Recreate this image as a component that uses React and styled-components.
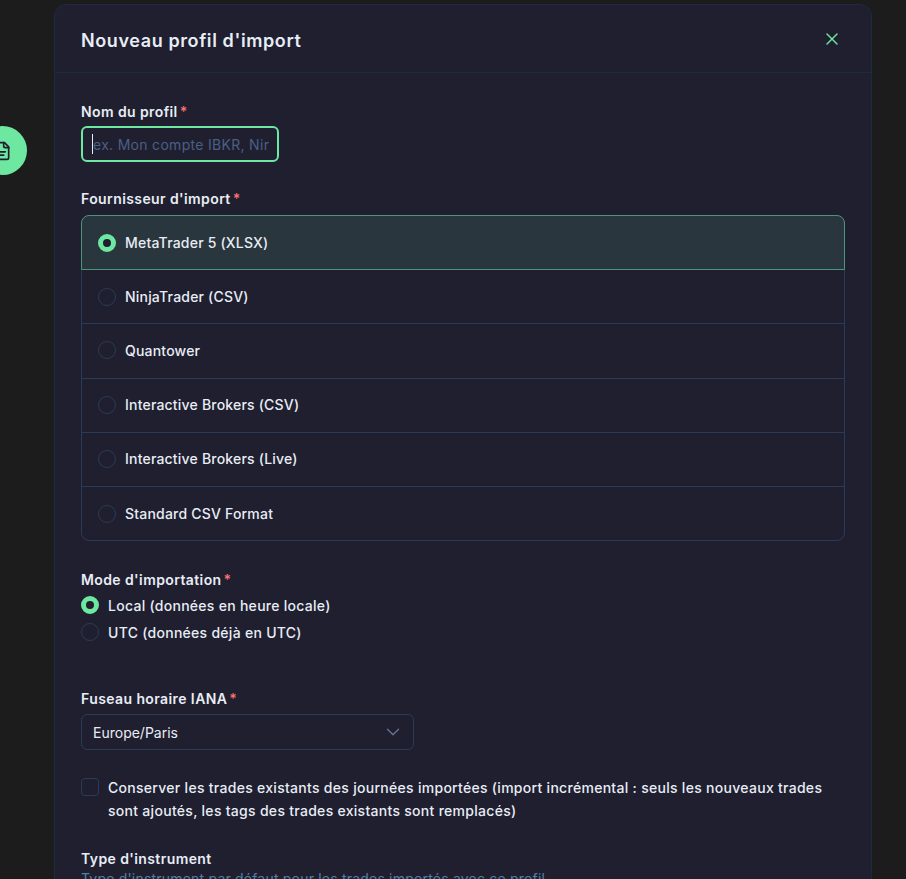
import React from "react";
import styled, { createGlobalStyle } from "styled-components";
import { X, ChevronDown } from "lucide-react";

const Global = createGlobalStyle`
  html, body { margin: 0; padding: 0; height: 879px; overflow: hidden; background: #1c1c1c; }
  body { font-family: Inter, "Noto Sans", sans-serif; }
  * { box-sizing: border-box; }
`;

const Page = styled.div`
  position: relative;
  height: 879px;
  overflow: hidden;
  padding: 4px 34px 0 54px;
`;
const Fab = styled.div`
  position: absolute;
  left: -22px;
  top: 126px;
  width: 49px;
  height: 49px;
  border-radius: 50%;
  background: #6ee7a0;
  display: flex;
  align-items: center;
  justify-content: flex-end;
  padding-right: 15px;
  color: #1f1f2f;
`;
const Modal = styled.section`
  background: #1f1f2f;
  border: 1px solid #1c2b42;
  border-radius: 12px;
  min-height: 1000px;
`;
const Header = styled.header`
  height: 68px;
  border-bottom: 1px solid #1c2b42;
  display: flex;
  align-items: center;
  justify-content: space-between;
  padding: 4px 29px 0 26px;
`;
const Title = styled.h2`
  margin: 0;
  font-size: 18px;
  font-weight: 600;
  letter-spacing: 0.6px;
  color: #e8edf5;
`;
const Close = styled.button`
  background: none;
  border: 0;
  padding: 0;
  width: 20px;
  height: 20px;
  margin-top: -4px;
  color: #6ee7a0;
  display: flex;
`;
const Body = styled.div`
  padding: 29px 26px 0;
`;
const Field = styled.div`
  margin-bottom: ${(p) => p.$mb || 0}px;
`;
const Label = styled.div`
  font-size: 14px;
  line-height: 20px;
  font-weight: 600;
  letter-spacing: 0.4px;
  color: #e8edf5;
  margin-bottom: ${(p) => p.$mb ?? 4}px;
`;
const Star = styled.span`
  color: #f87171;
  margin-left: 2px;
`;
const Input = styled.div`
  width: 198px;
  height: 36px;
  border: 2px solid #6ee7a0;
  border-radius: 6px;
  display: flex;
  align-items: center;
  padding-left: 9px;
  font-size: 14px;
  letter-spacing: 0.3px;
  color: #4a5f85;
  white-space: nowrap;
  overflow: hidden;
`;
const Caret = styled.span`
  width: 1px;
  height: 20px;
  background: #e8edf5;
  flex: none;
`;
const Group = styled.div`
  border-radius: 8px;
  display: flex;
  flex-direction: column;
`;
const Row = styled.div`
  height: ${(p) => p.$h}px;
  margin-top: ${(p) => (p.$first ? 0 : -1)}px;
  position: relative;
  z-index: ${(p) => (p.$active ? 1 : 0)};
  border: 1px solid ${(p) => (p.$active ? "#4e9479" : "#2b3b55")};
  background: ${(p) => (p.$active ? "#2a363e" : "transparent")};
  border-radius: ${(p) => (p.$first ? "8px 8px 0 0" : p.$last ? "0 0 8px 8px" : "0")};
  display: flex;
  align-items: center;
  gap: 9px;
  padding: 0 16px ${(p) => p.$pb}px;
  font-size: 14px;
  font-weight: 500;
  letter-spacing: 0.2px;
  color: #e8edf5;
`;
const Radio = styled.span`
  width: 18px;
  height: 18px;
  flex: none;
  border-radius: 50%;
  border: ${(p) => (p.$on ? "5px solid #6ee7a0" : "1px solid #2b3b55")};
  background: ${(p) => (p.$on ? "#1f1f2f" : "transparent")};
`;
const ModeRow = styled.div`
  display: flex;
  align-items: center;
  gap: 9px;
  height: 18px;
  margin-bottom: 9px;
  font-size: 14px;
  font-weight: 500;
  letter-spacing: 0.28px;
  color: #e8edf5;
`;
const Select = styled.div`
  width: 333px;
  height: 36px;
  border: 1px solid #2b3b55;
  border-radius: 6px;
  display: flex;
  align-items: center;
  justify-content: space-between;
  padding: 0 9px 0 11px;
  font-size: 14px;
  color: #e8edf5;
  svg { color: #64748b; }
`;
const CheckRow = styled.div`
  display: flex;
  gap: 9px;
  font-size: 14px;
  line-height: 23px;
  font-weight: 500;
  letter-spacing: 0.29px;
  color: #e8edf5;
`;
const Box = styled.span`
  width: 18px;
  height: 18px;
  flex: none;
  margin-top: 2px;
  border: 1px solid #2b3b55;
  border-radius: 4px;
`;
const Hint = styled.div`
  font-size: 14px;
  line-height: 20px;
  letter-spacing: 0.2px;
  color: #4f80aa;
`;

const providers = [
  { name: "MetaTrader 5 (XLSX)", h: 55, pb: 0 },
  { name: "NinjaTrader (CSV)", h: 55, pb: 0 },
  { name: "Quantower", h: 56, pb: 2 },
  { name: "Interactive Brokers (CSV)", h: 55, pb: 2 },
  { name: "Interactive Brokers (Live)", h: 55, pb: 2 },
  { name: "Standard CSV Format", h: 55, pb: 0 },
];

export default function App() {
  return (
    <Page>
      <Global />
      <Fab>
        <svg width="20" height="20" viewBox="0 0 24 24" fill="none" stroke="currentColor" strokeWidth="2" strokeLinecap="round" strokeLinejoin="round">
          <path d="M15 2H6a2 2 0 0 0-2 2v16a2 2 0 0 0 2 2h12a2 2 0 0 0 2-2V7Z" />
          <path d="M14 2v4a2 2 0 0 0 2 2h4" />
          <path d="M8 13h8" />
          <path d="M8 17h6" />
        </svg>
      </Fab>
      <Modal>
        <Header>
          <Title>Nouveau profil d'import</Title>
          <Close aria-label="Fermer"><X size={20} strokeWidth={1.75} /></Close>
        </Header>
        <Body>
          <Field $mb={27}>
            <Label>Nom du profil<Star>*</Star></Label>
            <Input><Caret />ex. Mon compte IBKR, Nir</Input>
          </Field>
          <Field $mb={29}>
            <Label $mb={6}>Fournisseur d'import<Star>*</Star></Label>
            <Group>
              {providers.map((p, i) => (
                <Row key={p.name} $h={p.h} $pb={p.pb} $active={i === 0} $first={i === 0} $last={i === providers.length - 1}>
                  <Radio $on={i === 0} />
                  {p.name}
                </Row>
              ))}
            </Group>
          </Field>
          <Field $mb={48}>
            <Label $mb={6}>Mode d'importation<Star>*</Star></Label>
            <ModeRow><Radio $on />Local (données en heure locale)</ModeRow>
            <ModeRow><Radio />UTC (données déjà en UTC)</ModeRow>
          </Field>
          <Field $mb={26}>
            <Label $mb={5}>Fuseau horaire IANA<Star>*</Star></Label>
            <Select>Europe/Paris<ChevronDown size={22} strokeWidth={1.5} /></Select>
          </Field>
          <Field $mb={27}>
            <CheckRow>
              <Box />
              <span>Conserver les trades existants des journées importées (import incrémental : seuls les nouveaux trades sont ajoutés, les tags des trades existants sont remplacés)</span>
            </CheckRow>
          </Field>
          <Field>
            <Label $mb={0}>Type d'instrument</Label>
            <Hint>Type d'instrument par défaut pour les trades importés avec ce profil</Hint>
          </Field>
        </Body>
      </Modal>
    </Page>
  );
}
